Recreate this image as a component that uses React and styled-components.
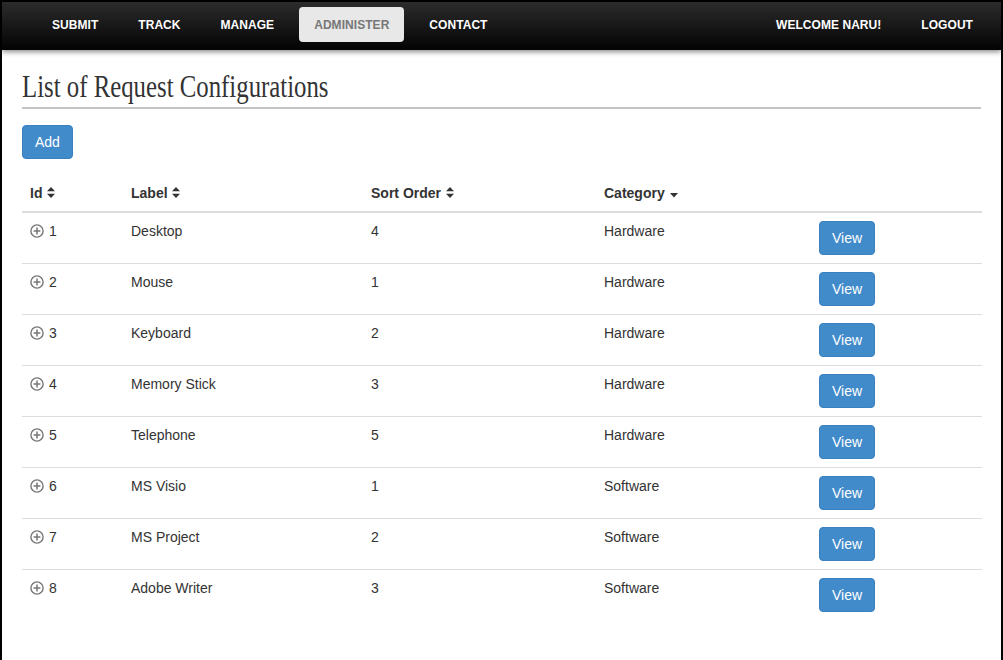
import React from "react";
import styled, { createGlobalStyle } from "styled-components";

const GlobalStyle = createGlobalStyle`
  html, body {
    margin: 0;
    padding: 0;
    background: #000;
  }
  body {
    font-family: "Liberation Sans", Arial, sans-serif;
    font-size: 14px;
    color: #333;
  }
`;

const rows = [
  { id: 1, label: "Desktop", order: 4, category: "Hardware" },
  { id: 2, label: "Mouse", order: 1, category: "Hardware" },
  { id: 3, label: "Keyboard", order: 2, category: "Hardware" },
  { id: 4, label: "Memory Stick", order: 3, category: "Hardware" },
  { id: 5, label: "Telephone", order: 5, category: "Hardware" },
  { id: 6, label: "MS Visio", order: 1, category: "Software" },
  { id: 7, label: "MS Project", order: 2, category: "Software" },
  { id: 8, label: "Adobe Writer", order: 3, category: "Software" },
];

const SortIcon = () => (
  <svg width="8" height="11" viewBox="0 0 8 11">
    <path d="M4 0 L8 4.3 L0 4.3 Z M0 6.7 L8 6.7 L4 11 Z" fill="#333" />
  </svg>
);

const CaretIcon = () => (
  <svg width="8" height="5" viewBox="0 0 8 5">
    <path d="M0 0 L8 0 L4 4.5 Z" fill="#333" />
  </svg>
);

const PlusCircle = () => (
  <svg width="14" height="14" viewBox="0 0 14 14">
    <circle cx="7" cy="7" r="6.1" fill="none" stroke="#777" strokeWidth="1.4" />
    <path d="M7 3.6 V10.4 M3.6 7 H10.4" stroke="#777" strokeWidth="1.5" />
  </svg>
);

export default function App() {
  return (
    <>
      <GlobalStyle />
      <Frame>
        <NavBar>
          <NavGroup>
            <NavItem>Submit</NavItem>
            <NavItem>Track</NavItem>
            <NavItem>Manage</NavItem>
            <NavItem active>Administer</NavItem>
            <NavItem>Contact</NavItem>
          </NavGroup>
          <NavGroup>
            <NavItem>Welcome Naru!</NavItem>
            <NavItem>Logout</NavItem>
          </NavGroup>
        </NavBar>
        <Content>
          <Title>
            <TitleText>List of Request Configurations</TitleText>
          </Title>
          <Toolbar>
            <Button>Add</Button>
          </Toolbar>
          <Table>
            <thead>
              <tr>
                <Th width={101}>
                  Id <SortIcon />
                </Th>
                <Th width={240}>
                  Label <SortIcon />
                </Th>
                <Th width={233}>
                  Sort Order <SortIcon />
                </Th>
                <Th width={215}>
                  Category <CaretIcon />
                </Th>
                <Th />
              </tr>
            </thead>
            <tbody>
              {rows.map((r, i) => (
                <Tr key={r.id} last={i === rows.length - 1}>
                  <Td>
                    <IdCell>
                      <PlusCircle />
                      {r.id}
                    </IdCell>
                  </Td>
                  <Td>{r.label}</Td>
                  <Td>{r.order}</Td>
                  <Td>{r.category}</Td>
                  <Td>
                    <Button>View</Button>
                  </Td>
                </Tr>
              ))}
            </tbody>
          </Table>
        </Content>
      </Frame>
    </>
  );
}

const Frame = styled.div`
  margin: 2px 2px 0 2px;
  width: 999px;
  height: 658px;
  background: #fff;
  overflow: hidden;
`;

const NavBar = styled.nav`
  position: relative;
  height: 48px;
  display: flex;
  justify-content: space-between;
  align-items: flex-start;
  padding: 5px 13px 0 35px;
  box-sizing: border-box;
  background: linear-gradient(to bottom, #2c2c2c, #030303);
  box-shadow: 0 2px 5px rgba(0, 0, 0, 0.45);
`;

const NavGroup = styled.div`
  display: flex;
  gap: 10px;
`;

const NavItem = styled.a`
  display: block;
  height: 35px;
  line-height: 36px;
  padding: 0 15px;
  border-radius: 4px;
  font-family: "Liberation Sans", Arial, sans-serif;
  font-weight: bold;
  font-size: 12px;
  letter-spacing: 0.05px;
  text-transform: uppercase;
  color: ${(p) => (p.active ? "#777" : "#fff")};
  background: ${(p) => (p.active ? "#e7e8e7" : "transparent")};
`;

const Content = styled.div`
  padding: 0 20px;
`;

const Title = styled.h1`
  margin: 19px 0 16px;
  height: 36px;
  padding-bottom: 2px;
  border-bottom: 2px solid #c4c4c4;
  font-family: "Liberation Serif", "Times New Roman", serif;
  font-weight: normal;
  font-size: 31px;
  line-height: 36px;
  color: #333;
  white-space: nowrap;
`;

const TitleText = styled.span`
  display: inline-block;
  transform: scaleX(0.8);
  transform-origin: left center;
`;

const Toolbar = styled.div`
  display: flex;
`;

const Button = styled.button`
  display: block;
  height: 34px;
  padding: 0 12px;
  border: 1px solid #3a81c0;
  border-radius: 4px;
  background: #428bca;
  color: #fff;
  font-family: "Liberation Sans", Arial, sans-serif;
  font-size: 14px;
  line-height: 32px;
`;

const Table = styled.table`
  width: 960px;
  margin-top: 16px;
  border-collapse: collapse;
  table-layout: fixed;
`;

const Th = styled.th`
  box-sizing: border-box;
  width: ${(p) => (p.width ? `${p.width}px` : "auto")};
  padding: 8px;
  text-align: left;
  font-weight: bold;
  font-size: 14px;
  line-height: 20px;
  border-bottom: 2px solid #ddd;
  svg {
    margin-left: 1px;
    vertical-align: 0;
  }
`;

const Tr = styled.tr`
  border-bottom: ${(p) => (p.last ? "none" : "1px solid #ddd")};
`;

const Td = styled.td`
  padding: 8px;
  vertical-align: top;
  font-size: 14px;
  line-height: 20px;
`;

const IdCell = styled.span`
  display: inline-flex;
  align-items: center;
  gap: 5px;
`;
